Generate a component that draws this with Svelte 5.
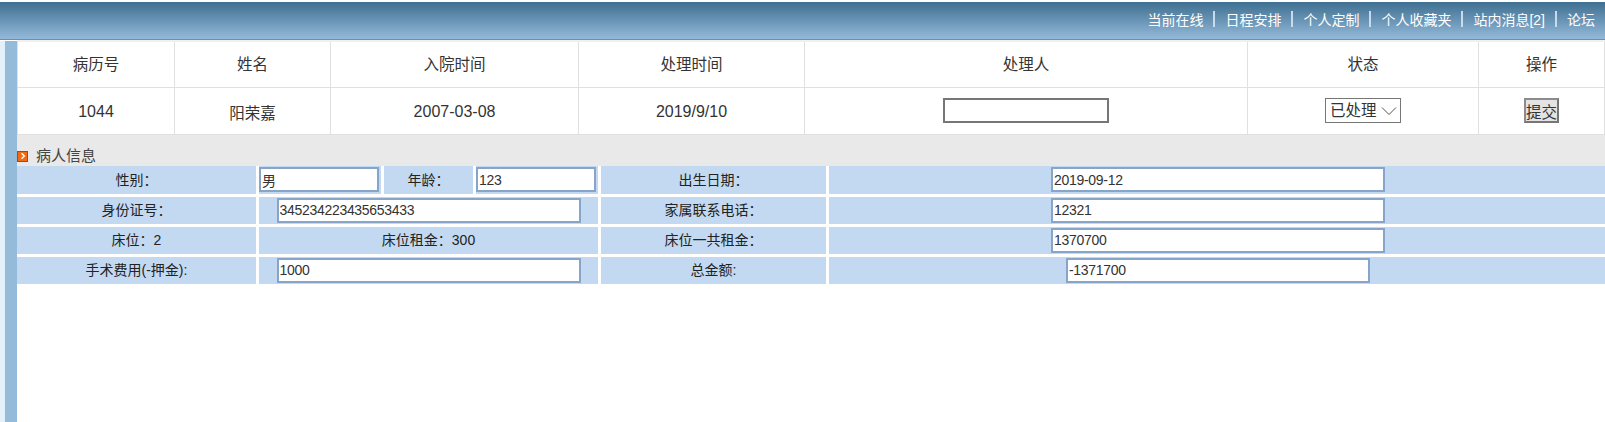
<script>
	const links = ['当前在线', '日程安排', '个人定制', '个人收藏夹', '站内消息[2]', '论坛'];
	const heads = ['病历号', '姓名', '入院时间', '处理时间', '处理人', '状态', '操作'];
</script>

<div class="page">
	<header class="topbar">
		{#each links as link, i}
			{#if i > 0}<span class="sep"></span>{/if}
			<a href="#top">{link}</a>
		{/each}
	</header>

	<div class="body">
		<div class="rail"></div>
		<main class="content">
			<table class="records">
				<colgroup>
					<col style="width: 157px" />
					<col style="width: 156px" />
					<col style="width: 248px" />
					<col style="width: 226px" />
					<col style="width: 443px" />
					<col style="width: 231px" />
					<col />
				</colgroup>
				<thead>
					<tr>
						{#each heads as head}
							<th>{head}</th>
						{/each}
					</tr>
				</thead>
				<tbody>
					<tr>
						<td>1044</td>
						<td class="cjk">阳荣嘉</td>
						<td>2007-03-08</td>
						<td>2019/9/10</td>
						<td><input class="plain-input" type="text" /></td>
						<td>
							<span class="select-wrap">
								<select>
									<option>已处理</option>
								</select>
								<svg width="16" height="8" viewBox="0 0 16 8" fill="none" stroke="#555" stroke-width="1">
									<path d="M1 .5l7 7 7-7" />
								</svg>
							</span>
						</td>
						<td><button type="button">提交</button></td>
					</tr>
				</tbody>
			</table>

			<div class="section-title">
				<span class="arrow-icon">
					<svg width="8" height="8" viewBox="0 0 8 8" fill="none" stroke="#fff" stroke-width="1.4">
						<path d="M2.5 1.2L5.4 4 2.5 6.8" />
					</svg>
				</span>
				<span>病人信息</span>
			</div>

			<div class="info-grid">
				<div class="cell">性别：</div>
				<div class="cell left"><input class="left-input" type="text" value="男" /></div>
				<div class="cell">年龄：</div>
				<div class="cell left"><input class="left-input" type="text" value="123" /></div>
				<div class="cell">出生日期：</div>
				<div class="cell last"><input class="wide" type="text" value="2019-09-12" /></div>

				<div class="cell">身份证号：</div>
				<div class="cell span3"><input class="mid" type="text" value="345234223435653433" /></div>
				<div class="cell">家属联系电话：</div>
				<div class="cell last"><input class="wide" type="text" value="12321" /></div>

				<div class="cell">床位：2</div>
				<div class="cell span3">床位租金：300</div>
				<div class="cell">床位一共租金：</div>
				<div class="cell last"><input class="wide" type="text" value="1370700" /></div>

				<div class="cell">手术费用(-押金):</div>
				<div class="cell span3"><input class="mid" type="text" value="1000" /></div>
				<div class="cell">总金额:</div>
				<div class="cell last"><input class="total" type="text" value="-1371700" /></div>
			</div>
		</main>
	</div>
</div>

<style>
	:global(body) {
		margin: 0;
		background: #fff;
	}

	.page {
		height: 422px;
		overflow: hidden;
		display: flex;
		flex-direction: column;
		font-family: 'Liberation Sans', 'Noto Sans CJK SC', sans-serif;
		color: #333;
	}

	.topbar {
		box-sizing: border-box;
		height: 38px;
		margin-top: 2px;
		flex-shrink: 0;
		display: flex;
		align-items: center;
		justify-content: flex-end;
		gap: 10px;
		padding: 0 10px 3px 0;
		background: linear-gradient(#3f6f91, #94b9da);
		border-bottom: 1px solid #6a8fae;
	}

	.topbar a {
		color: #fff;
		font-size: 14px;
		text-decoration: none;
	}

	.sep {
		width: 2px;
		height: 16px;
		background: #c9dbea;
	}

	.body {
		flex: 1;
		display: flex;
		min-height: 0;
	}

	.rail {
		width: 12px;
		margin-top: 1px;
		background: #94bbd9;
		border-left: 5px solid #e3f0fa;
		flex-shrink: 0;
	}

	.content {
		flex: 1;
		min-width: 0;
	}

	.records {
		width: 100%;
		table-layout: fixed;
		border-collapse: collapse;
		border-top: 2px solid #f0f0f0;
		font-size: 16px;
	}

	.records th,
	.records td {
		box-sizing: border-box;
		padding: 0;
		text-align: center;
		font-weight: 400;
		border: 1px solid #e0e0e0;
		border-top: 0;
	}

	.records th {
		height: 46px;
		padding-bottom: 3px;
		font-size: 15.5px;
	}

	.records td {
		height: 47px;
		padding-top: 2px;
	}

	.records .cjk {
		font-size: 15.5px;
	}

	.plain-input {
		box-sizing: border-box;
		width: 166px;
		height: 25px;
		border: 2px solid #767676;
		vertical-align: middle;
		margin-top: -2px;
	}

	.select-wrap {
		position: relative;
		display: inline-block;
		vertical-align: middle;
		margin-top: -2px;
	}

	select {
		display: block;
		box-sizing: border-box;
		width: 76px;
		height: 25px;
		padding: 0 0 0 4px;
		appearance: none;
		border: 1px solid #767676;
		border-radius: 0;
		background: #fff;
		color: #333;
		font-size: 15.5px;
		font-family: inherit;
	}

	.select-wrap svg {
		position: absolute;
		right: 4px;
		top: 9px;
	}

	button {
		box-sizing: border-box;
		width: 35px;
		height: 25px;
		padding: 0;
		margin-top: -2px;
		vertical-align: middle;
		white-space: nowrap;
		font-size: 15.5px;
		font-family: inherit;
		color: #333;
		background: #e3e3e3;
		border: 2px solid #767676;
		border-left-color: #8c8c8c;
		border-top-color: #8c8c8c;
	}

	.section-title {
		box-sizing: border-box;
		height: 31px;
		display: flex;
		align-items: flex-end;
		gap: 8px;
		background: #e9e9e9;
		font-size: 15px;
		line-height: 20px;
		color: #444;
	}

	.arrow-icon {
		box-sizing: border-box;
		width: 11px;
		height: 11px;
		margin-bottom: 4px;
		display: flex;
		align-items: center;
		justify-content: center;
		background: #f26a14;
		border: 1px solid #55606a;
	}

	.info-grid {
		display: grid;
		grid-template-columns: 239px 122px 89px 122px 225px 1fr;
		grid-template-rows: 28px 27px 27px 27px;
		gap: 3px;
		font-size: 14px;
		color: #222;
	}

	.cell {
		display: flex;
		align-items: center;
		justify-content: center;
		background: #c3d9f1;
		line-height: 1;
	}

	.cell.left {
		justify-content: flex-start;
	}

	.cell.last {
		padding-left: 2px;
	}

	.span3 {
		grid-column: span 3;
	}

	.cell input {
		box-sizing: border-box;
		height: 25px;
		padding: 0 1px;
		border: 2px solid #86a5c9;
		background: #fff;
		font: inherit;
		letter-spacing: -0.3px;
		color: #333;
	}

	.left-input {
		width: 120px;
	}

	.mid {
		width: 304px;
	}

	.wide {
		width: 334px;
	}

	.total {
		width: 304px;
	}
</style>
